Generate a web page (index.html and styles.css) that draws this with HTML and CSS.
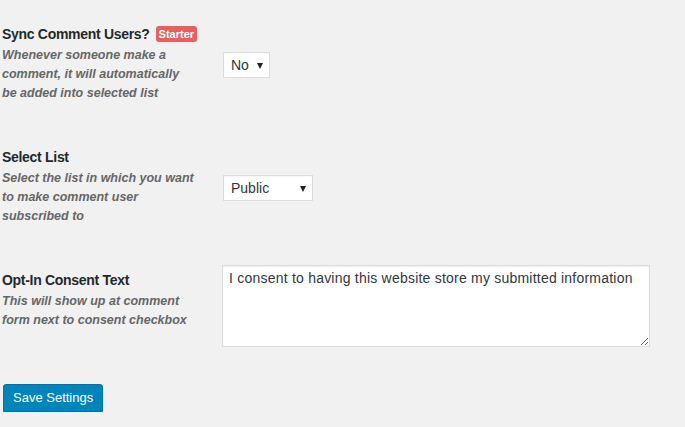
FILE: index.html
```html
<!DOCTYPE html>
<html>
<head>
<meta charset="utf-8">
<link rel="stylesheet" href="styles.css">
</head>
<body>
<form class="settings">
  <div class="row">
    <div class="label">
      <div class="title">Sync Comment Users? <span class="badge">Starter</span></div>
      <div class="desc">Whenever someone make a<br>comment, it will automatically<br>be added into selected list</div>
    </div>
    <div class="control">
      <div class="select select-no"><span>No</span><span class="arrow"></span></div>
    </div>
  </div>
  <div class="row">
    <div class="label">
      <div class="title">Select List</div>
      <div class="desc">Select the list in which you want<br>to make comment user<br>subscribed to</div>
    </div>
    <div class="control">
      <div class="select select-list"><span>Public</span><span class="arrow"></span></div>
    </div>
  </div>
  <div class="row row-text">
    <div class="label">
      <div class="title">Opt-In Consent Text</div>
      <div class="desc">This will show up at comment<br>form next to consent checkbox</div>
    </div>
    <div class="control">
      <textarea class="consent">I consent to having this website store my submitted information</textarea>
    </div>
  </div>
  <div class="actions">
    <button type="button" class="btn">Save Settings</button>
  </div>
</form>
</body>
</html>
```

FILE: styles.css
```css
html, body {
  margin: 0;
  padding: 0;
  background: #f1f1f1;
}
body {
  font-family: "Liberation Sans", Arial, sans-serif;
  color: #23282d;
}
.settings {
  display: flex;
  flex-direction: column;
  padding: 24px 0 0 2px;
}
.row {
  display: grid;
  grid-template-columns: 220px 1fr;
  align-items: center;
  margin-bottom: 41px;
}
.row-text {
  margin-top: -5px;
  margin-bottom: 37px;
}
.label {
  padding-bottom: 3px;
}
.row-text .label {
  padding-bottom: 12px;
}
.title {
  font-size: 14px;
  font-weight: bold;
  letter-spacing: -0.3px;
  line-height: 20px;
  color: #23282d;
  display: flex;
  align-items: center;
}
.badge {
  display: inline-block;
  margin-left: 6px;
  background: #e66060;
  color: #fff;
  font-size: 11px;
  font-weight: bold;
  letter-spacing: 0;
  line-height: 16px;
  padding: 0 3px;
  border-radius: 3px;
}
.desc {
  margin-top: 2px;
  font-size: 12.5px;
  font-style: italic;
  font-weight: bold;
  line-height: 19px;
  color: #666;
}
.control {
  padding-left: 1px;
}
.select {
  box-sizing: border-box;
  height: 26px;
  background: #fff;
  border: 1px solid #ddd;
  box-shadow: inset 0 1px 2px rgba(0,0,0,0.04);
  display: flex;
  align-items: center;
  justify-content: space-between;
  padding: 0 6px 0 7px;
  font-size: 14px;
  color: #32373c;
}
.select-no { width: 47px; }
.select-list { width: 90px; }
.arrow {
  width: 0;
  height: 0;
  border-left: 3.5px solid transparent;
  border-right: 3.5px solid transparent;
  border-top: 6px solid #222;
  margin-top: 1px;
}
.consent {
  display: block;
  box-sizing: border-box;
  width: 428px;
  height: 82px;
  margin: 0 0 0 -1px;
  background: #fff;
  border: 1px solid #ddd;
  box-shadow: inset 0 1px 2px rgba(0,0,0,0.07);
  font-family: "Liberation Sans", Arial, sans-serif;
  font-size: 14px;
  letter-spacing: 0.22px;
  line-height: 20px;
  color: #32373c;
  padding: 2px 6px;
  resize: both;
  outline: none;
}
.actions {
  display: flex;
}
.btn {
  box-sizing: border-box;
  height: 28px;
  margin-left: 1px;
  background: #0085ba;
  border: 1px solid #0073aa;
  border-radius: 3px;
  box-shadow: 0 1px 0 #006799;
  color: #fff;
  font-family: "Liberation Sans", Arial, sans-serif;
  font-size: 13px;
  line-height: 26px;
  white-space: nowrap;
  padding: 0 9px;
  cursor: pointer;
}
```
